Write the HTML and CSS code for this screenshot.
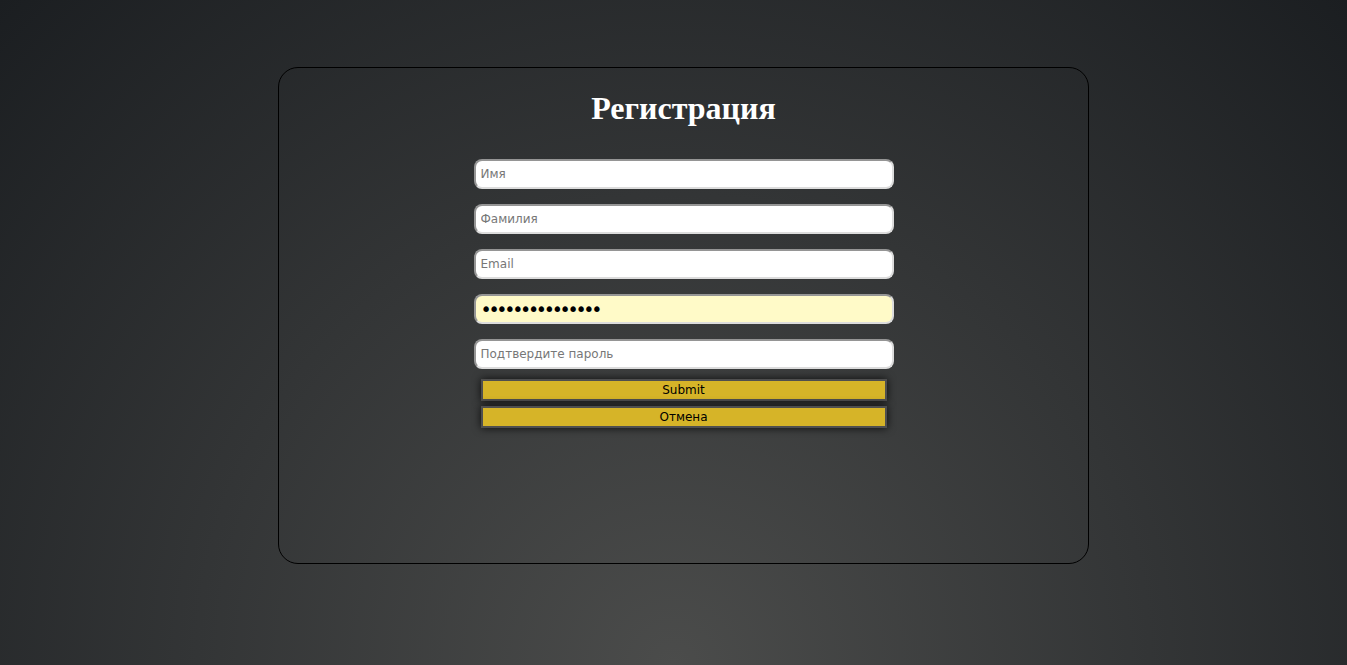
FILE: index.html
```html
<!DOCTYPE html>
<html lang="ru">
<head>
<meta charset="utf-8">
<title>Регистрация</title>
<link rel="stylesheet" href="styles.css">
</head>
<body>
<div class="page">
  <div class="card">
    <h1 class="title">Регистрация</h1>
    <form class="form">
      <input class="field" type="text" placeholder="Имя">
      <input class="field" type="text" placeholder="Фамилия">
      <input class="field" type="email" placeholder="Email">
      <input class="field field-filled" type="password" value="123456789012345">
      <input class="field" type="password" placeholder="Подтвердите пароль">
      <div class="actions">
        <button class="btn" type="submit">Submit</button>
        <button class="btn" type="button">Отмена</button>
      </div>
    </form>
  </div>
</div>
</body>
</html>
```

FILE: styles.css
```css
html, body {
  margin: 0;
  padding: 0;
  height: 100%;
}

body {
  background: radial-gradient(ellipse farthest-corner at 50% 100%, #4b4c4b 0%, #1b1e21 100%);
  font-family: "DejaVu Sans", Verdana, sans-serif;
  overflow: hidden;
}

.page {
  padding-top: 67px;
  padding-left: 278px;
}

.card {
  box-sizing: border-box;
  width: 811px;
  height: 497px;
  border: 1px solid #000;
  border-radius: 20px;
  padding-top: 22px;
  display: flex;
  flex-direction: column;
  align-items: center;
}

.title {
  margin: 0 0 32px;
  font-family: "Liberation Serif", "Times New Roman", serif;
  font-size: 32px;
  font-weight: bold;
  color: #fff;
}

.form {
  width: 420px;
  display: flex;
  flex-direction: column;
  gap: 15px;
}

.field {
  box-sizing: border-box;
  width: 420px;
  height: 30px;
  margin: 0;
  padding: 0 5px;
  border: 2px solid;
  border-color: #959595 #dcdcdc #dcdcdc #959595;
  border-radius: 8px;
  background: #fff;
  font-family: "DejaVu Sans", Verdana, sans-serif;
  font-size: 12px;
  color: #000;
  outline: none;
}

.field::placeholder {
  color: #777;
}

.field-filled {
  background: #fffac8;
  font-size: 19px;
  letter-spacing: -3.3px;
}

.actions {
  display: flex;
  flex-direction: column;
  align-items: center;
  gap: 5px;
  margin-top: -5px;
}

.btn {
  box-sizing: border-box;
  width: 406px;
  height: 22px;
  margin: 0;
  padding: 0;
  border: 2px solid #4f4f4f;
  background: #d6b428;
  color: #000;
  font-family: "DejaVu Sans", Verdana, sans-serif;
  font-size: 12px;
  box-shadow: 0 0 8px rgba(0, 0, 0, 0.8);
  cursor: pointer;
}
```
